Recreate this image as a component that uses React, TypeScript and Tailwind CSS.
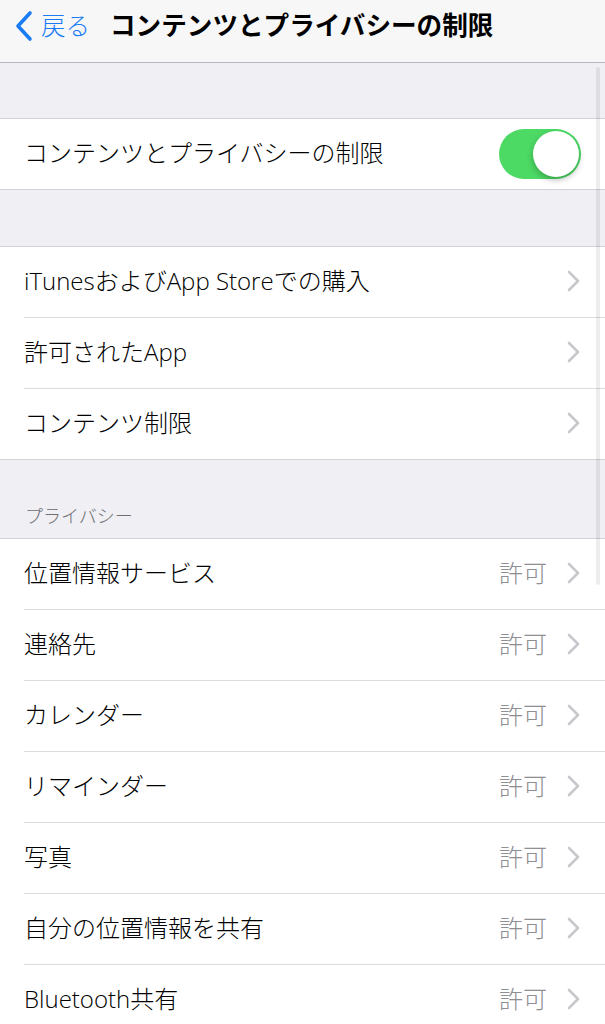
import React from "react";

const Chevron = () => (
  <svg width="13" height="22" viewBox="0 0 13 22" className="shrink-0">
    <polyline points="2,2 11,11 2,20" fill="none" stroke="#c7c7cc" strokeWidth="2.6" strokeLinecap="round" strokeLinejoin="round" />
  </svg>
);

type RowProps = { label: string; value?: string; last?: boolean };

const Row = ({ label, value, last }: RowProps) => (
  <div className="flex">
    <div className={`flex-1 ml-[24px] flex items-center pr-[25px] pb-[3px] ${last ? "h-[70px]" : "h-[71px] border-b border-[#dcdce0]"}`}>
      <span className="flex-1 text-[24px] leading-none text-black font-light">{label}</span>
      {value && <span className="text-[24px] leading-none text-[#8e8e93] mr-[20px] font-light">{value}</span>}
      <Chevron />
    </div>
  </div>
);

export default function App() {
  const font = { fontFamily: '"Open Sans", "Noto Sans CJK JP", sans-serif' };
  return (
    <div className="relative w-[605px] h-[1024px] overflow-hidden bg-[#efeff4]" style={font}>
      {/* Nav bar */}
      <div className="h-[63px] bg-[#f7f7f8] border-b border-[#b8b8bc] flex items-center pb-[10px]">
        <div className="flex items-center ml-[14px]">
          <svg width="20" height="32" viewBox="0 0 20 32">
            <polyline points="16,3 4,16 16,29" fill="none" stroke="#1a7cf5" strokeWidth="3.6" strokeLinecap="round" strokeLinejoin="round" />
          </svg>
          <span className="ml-[7px] text-[24.5px] leading-none text-[#1a7cf5] font-light">戻る</span>
        </div>
        <span className="ml-[20px] text-[25.6px] leading-none font-bold text-black">コンテンツとプライバシーの制限</span>
      </div>

      <div className="h-[55px]" />

      {/* Toggle group */}
      <div className="bg-white border-y border-[#d2d2d6]">
        <div className="h-[70px] flex items-center pl-[24px] pr-[24px]">
          <span className="flex-1 text-[24px] leading-none text-black font-light pb-[3px]">コンテンツとプライバシーの制限</span>
          <div className="w-[82px] h-[50px] rounded-full bg-[#4cd964] relative">
            <div className="absolute right-[2px] top-[2px] w-[46px] h-[46px] rounded-full bg-white shadow-[0_3px_6px_rgba(0,0,0,0.25)]" />
          </div>
        </div>
      </div>

      <div className="h-[56px]" />

      <div className="bg-white border-y border-[#d2d2d6]">
        <Row label="iTunesおよびApp Storeでの購入" />
        <Row label="許可されたApp" />
        <Row label="コンテンツ制限" last />
      </div>

      <div className="h-[78px] flex items-end pb-[11px] pl-[25px]">
        <span className="text-[18px] leading-[22px] text-[#6d6d72] font-light">プライバシー</span>
      </div>

      <div className="bg-white border-t border-[#d2d2d6]">
        <Row label="位置情報サービス" value="許可" />
        <Row label="連絡先" value="許可" />
        <Row label="カレンダー" value="許可" />
        <Row label="リマインダー" value="許可" />
        <Row label="写真" value="許可" />
        <Row label="自分の位置情報を共有" value="許可" />
        <Row label="Bluetooth共有" value="許可" />
      </div>

      {/* scroll indicator */}
      <div className="absolute right-[5px] top-[67px] w-[4px] h-[518px] rounded-full bg-black/[0.07]" />
    </div>
  );
}
